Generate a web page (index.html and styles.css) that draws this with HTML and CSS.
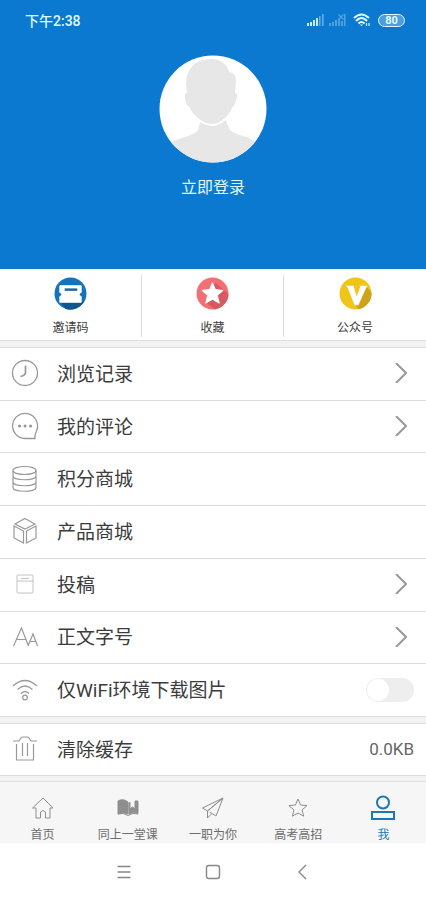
FILE: index.html
```html
<!DOCTYPE html>
<html lang="zh-CN">
<head>
<meta charset="utf-8">
<meta name="viewport" content="width=device-width, initial-scale=1">
<title>我</title>
<link rel="stylesheet" href="styles.css">
</head>
<body>
<header class="profile">
  <div class="status">
    <time>下午2:38</time>
    <div class="status-icons">
      <svg class="signal" width="17" height="12" viewBox="0 0 17 12"><path d="M0 9h2v3H0zM3 8h2v4H3zM6 6h2v6H6zM9 4h2v8H9z"/><path opacity=".45" d="M12 2h1.600v10H12zM15 0h1.600v12H15z"/></svg>
      <svg class="signal" width="17" height="12" viewBox="0 0 17 12"><path opacity=".35" d="M0 9h2v3H0zM3 8h2v4H3zM6 6h2v6H6zM9 5h2v7H9zM12 7h2v5h-2zM15 0h1.600v12H15zM10 0l2 2 2-2 1 1-2 2 2 2-1 1-2-2-2 2-1-1 2-2-2-2z"/></svg>
      <svg class="wifi" width="18" height="14" viewBox="0 0 18 14"><path d="M1 5Q8.500 -2 16 5M3 8Q8.500 2 14 8M5.500 10.500Q8.500 7.500 11.500 10.500"/><path class="dot" d="M7 11.500h3l-1.500 1.800z"/><path d="M13.500 10v3M16 10v3" stroke-width="1.200"/></svg>
      <span class="battery">80</span>
    </div>
  </div>
  <a class="login" href="#login">
    <svg class="avatar" viewBox="0 0 108 108"><defs><clipPath id="disc"><circle cx="54" cy="54" r="53.500"/></clipPath></defs><circle cx="54" cy="54" r="53.500" fill="#fff"/><g clip-path="url(#disc)" fill="#e7e7e7"><path d="M42 64L39 75Q36 79 26 82Q14 85 9 90V108H99V90Q96 86 88 82Q75 79 71 75L66 64Z"/><path stroke="#fff" stroke-width="2" d="M52 3C36 3 26 13 26 29L27 37Q23 38 26 47Q27 52 30 53C33 61 44 70 53 70C62 70 71 61 74 53Q77 51 78 46Q81 38 77 37L78 26Q78 17 71 16C68 8 62 3 52 3Z"/></g></svg>
    <span>立即登录</span>
  </a>
</header>

<nav class="quick" aria-label="快捷入口">
  <a href="#invite"><svg viewBox="0 0 34 34"><circle cx="17" cy="17" r="16.500" fill="#1373bd"/><path d="M7 26h22l3-3A16.500 16.500 0 0 1 12 33z" fill="#10558b"/><path d="M6 9h22v7a2 2 0 0 0 0 4v6H6v-6a2 2 0 0 0 0-4z" fill="#fff" stroke="#fff"/><path d="M11 13h13" stroke="#17649f" stroke-width="2.500"/></svg><span>邀请码</span></a>
  <a href="#favorites"><svg viewBox="0 0 34 34"><defs><clipPath id="red"><circle cx="17" cy="17" r="16.500"/></clipPath></defs><g clip-path="url(#red)"><path fill="#f36f76" d="M0 0h34v34H0z"/><path fill="#d75961" d="M20 6L34 18V34H20L10 26z"/></g><path fill="#fff" stroke="#fff" stroke-linejoin="round" d="M17 6l3 7 8 .8-6 5.200 2 8-7-4-7 4 2-8-6-5.200 8-.8z"/></svg><span>收藏</span></a>
  <a href="#official"><svg viewBox="0 0 34 34"><defs><clipPath id="gold"><circle cx="17" cy="17" r="16.500"/></clipPath></defs><g clip-path="url(#gold)"><path fill="#f0c51b" d="M0 0h34v34H0z"/><path fill="#cda31c" d="M27 9l12 12-6 14H22l-5-5z"/></g><path fill="#fff" d="M7 9h8l3 11 4-10-1-1h8l-1 2-8 18h-4L9 11z"/></svg><span>公众号</span></a>
</nav>

<main class="settings">
  <ul class="group group-main">
    <li><a class="row" href="#history"><svg class="icon" viewBox="0 0 28 28" stroke-width="1.300"><circle cx="14" cy="14" r="12.500"/><path d="M14.500 6.500v7.500q-1 3-5 3.500" stroke-width="1.700"/></svg><span class="label">浏览记录</span><svg class="chevron" viewBox="0 0 12 20"><path d="M1 0l10 10L1 20"/></svg></a></li>
    <li><a class="row" href="#comments"><svg class="icon" viewBox="0 0 28 28" stroke-width="1.300"><path d="M24 26.500H14A12.500 12.500 0 1 1 25.500 19Q23.500 23 24 26.500z"/><path d="M8.500 14h.1M14 14h.1M19.500 14h.1" stroke-width="3" stroke-linecap="round"/></svg><span class="label">我的评论</span><svg class="chevron" viewBox="0 0 12 20"><path d="M1 0l10 10L1 20"/></svg></a></li>
    <li><a class="row" href="#points"><svg class="icon" viewBox="0 0 28 28" stroke-width="1.200"><ellipse cx="13.500" cy="5.500" rx="11.500" ry="4"/><path d="M2 5.500v17c0 5 23 5 23 0v-17M2 11c0 5 23 5 23 0M2 17c0 5 23 5 23 0"/></svg><span class="label">积分商城</span></a></li>
    <li><a class="row" href="#products"><svg class="icon" viewBox="0 0 28 28" stroke-width="1.200"><path d="M14 1.500l10 5.500-10 5-10-5zM3 9l9.500 5v12L3 21zM25 9l-9.500 5v12L25 21z"/></svg><span class="label">产品商城</span></a></li>
    <li><a class="row" href="#submit"><svg class="icon pale" viewBox="0 0 28 28"><rect x="6" y="5" width="16" height="18" rx="1"/><path d="M6 11h16M10 8.500h8"/></svg><span class="label">投稿</span><svg class="chevron" viewBox="0 0 12 20"><path d="M1 0l10 10L1 20"/></svg></a></li>
    <li><a class="row" href="#font-size"><svg class="icon" viewBox="0 0 28 28" stroke-width="1.200"><path d="M2.500 23L10.500 5l7 18M6 16.500h9M17 23l5-12 4.500 12M19 18.500h6"/></svg><span class="label">正文字号</span><svg class="chevron" viewBox="0 0 12 20"><path d="M1 0l10 10L1 20"/></svg></a></li>
    <li><label class="row"><svg class="icon" viewBox="0 0 28 28" stroke-width="1.200"><path d="M2 10Q14 -1 26 10M6.500 13.500Q14 6.500 21.500 13.500M10 17.500Q14 13.500 18 17.500"/><circle cx="14" cy="21.500" r="2.300"/></svg><span class="label">仅WiFi环境下载图片</span><input class="switch" type="checkbox" role="switch"></label></li>
  </ul>
  <ul class="group">
    <li><button class="row" type="button"><svg class="icon" viewBox="0 0 28 28" stroke-width="1.200"><path d="M2 6h6q2-4 4-4h4q2 0 4 4h6M5.500 9v16h17V9M11.500 8v13M16.500 8v13"/></svg><span class="label">清除缓存</span><span class="value">0.0KB</span></button></li>
  </ul>
</main>

<nav class="tabs" aria-label="主导航">
  <a href="#home"><svg viewBox="0 0 26 26"><path d="M2.500 13L13 3l10 10h-3v10h-4.500v-6q-2.500-3-5 0v6H6V13z"/></svg><span>首页</span></a>
  <a href="#class"><svg viewBox="0 0 26 26"><path class="solid" d="M3 6q5-3 10 1v12q-5-2.500-10 0zM14 8l1-.6v6.600l2.500-2 2.500 2V6h3v12.500q-5-2-9 .5z"/><path d="M3 19q5-2 10 1.500 5-3.500 10-1.500"/></svg><span>同上一堂课</span></a>
  <a href="#career"><svg viewBox="0 0 26 26"><path d="M23 3L2.500 13l5 3zM23 3L7.500 16v7l4-4M23 3l-7 18-6.500-4"/></svg><span>一职为你</span></a>
  <a href="#exam"><svg viewBox="0 0 26 26"><path d="M13 4l2.600 6 6.400.6-4.900 4.300 1.500 6.300L13 18l-5.600 3.200 1.500-6.300L4 10.600l6.400-.6z"/></svg><span>高考高招</span></a>
  <a class="active" href="#me" aria-current="page"><svg viewBox="0 0 26 26" stroke-width="2"><circle cx="13" cy="7.500" r="6"/><path d="M2 17h22v7H2z"/></svg><span>我</span></a>
</nav>

<footer class="system">
  <button type="button" aria-label="菜单"><svg viewBox="0 0 18 18"><path d="M2.500 3.500h13M2.500 9h13M2.500 14.500h13"/></svg></button>
  <button type="button" aria-label="主屏幕"><svg viewBox="0 0 18 18"><rect x="2.500" y="2.500" width="13" height="13" rx="2.500"/></svg></button>
  <button type="button" aria-label="返回"><svg viewBox="0 0 18 18"><path d="M13 2L6 9l7 7"/></svg></button>
</footer>
</body>
</html>
```
FILE: styles.css
```css
* { box-sizing: border-box; }

body {
  margin: 0;
  min-height: 100vh;
  display: flex;
  flex-direction: column;
  background: #f3f3f3;
  color: #3c3c3c;
  font-family: Roboto, "Noto Sans CJK SC", sans-serif;
}

a { color: inherit; text-decoration: none; }
button { border: 0; background: none; color: inherit; font: inherit; text-align: left; }
svg { display: block; fill: none; flex: none; }
ul { list-style: none; margin: 0; padding: 0; }

.profile {
  background: #0b79d0;
  color: #e0fbff;
  padding-bottom: 69px;
}

.status {
  height: 40px;
  padding: 0 21px 0 25px;
  display: flex;
  align-items: center;
  justify-content: space-between;
  font-size: 14px;
  font-weight: 500;
}

.status-icons { display: flex; align-items: center; gap: 5px; }
.signal { fill: #c9f0f5; }
.wifi { margin-left: 2px; stroke: #e0fbff; stroke-width: 2; }
.wifi .dot { fill: #e0fbff; stroke: none; }

.battery {
  width: 27px;
  height: 13px;
  margin-left: 2px;
  border: 1px solid #e0fbff;
  border-radius: 7px;
  background: #4b9fe0;
  font-size: 11px;
  line-height: 11px;
  font-weight: 700;
  text-align: center;
}

.login {
  padding-top: 15px;
  display: flex;
  flex-direction: column;
  align-items: center;
  gap: 13px;
  font-size: 16px;
  line-height: 24px;
}

.avatar { width: 108px; height: 108px; }

.quick {
  height: 72px;
  padding: 6px 0 5px;
  display: grid;
  grid-template-columns: repeat(3, 1fr);
  background: #fff;
  border-bottom: 1px solid #ddd;
  font-size: 12px;
  line-height: 18px;
}

.quick a {
  padding-top: 2px;
  display: flex;
  flex-direction: column;
  align-items: center;
  gap: 9px;
  border-right: 1px solid #ddd;
}

.quick a:last-child { border-right: 0; }
.quick svg { width: 33px; height: 33px; }

.settings {
  flex: 1;
  padding: 6px 0 5px;
  display: flex;
  flex-direction: column;
  gap: 6px;
}

.group { background: #fff; border-top: 1px solid #ddd; }

.group-main {
  flex: 1;
  display: grid;
  grid-auto-rows: 1fr;
}

.group li { display: grid; border-bottom: 1px solid #ddd; }

.row {
  width: 100%;
  min-height: 51px;
  padding: 0 12px 1px 11px;
  display: flex;
  align-items: center;
  font-size: 19px;
  line-height: 28px;
}

.icon {
  width: 28px;
  height: 28px;
  margin-right: 18px;
  stroke: #999;
}

.icon.pale { stroke: #c4c4c4; }
.label { flex: 1; padding-top: 3px; }

.chevron {
  width: 12px;
  height: 20px;
  margin-right: 7px;
  stroke: #999;
  stroke-width: 2;
}

.switch {
  appearance: none;
  width: 48px;
  height: 24px;
  margin: 0;
  border-radius: 12px;
  background: #eee;
}

.switch::before {
  content: "";
  display: block;
  width: 22px;
  height: 22px;
  margin: 1px;
  border-radius: 50%;
  background: #fff;
}

.switch:checked { background: #0b79d0; }
.switch:checked::before { margin-left: 25px; }

.value {
  color: #666;
  font-size: 17px;
}

.tabs {
  height: 62px;
  padding-top: 13px;
  display: grid;
  grid-template-columns: repeat(5, 1fr);
  background: #f6f6f6;
  border-top: 1px solid #ddd;
  color: #6c6c6c;
  font-size: 12px;
  line-height: 18px;
}

.tabs a {
  display: flex;
  flex-direction: column;
  align-items: center;
  gap: 5px;
}

.tabs svg { width: 26px; height: 26px; stroke: #8e8e8e; }
.tabs .solid { fill: #8e8e8e; }
.tabs .active { color: #1d77b5; }
.tabs .active svg { stroke: #1d77b5; }

.system {
  height: 57px;
  display: flex;
  align-items: center;
  justify-content: center;
  gap: 22px;
  background: #fff;
}

.system button { width: 67px; padding: 0; display: flex; justify-content: center; }
.system svg { width: 18px; height: 18px; stroke: #888; stroke-width: 1.400; }
```
